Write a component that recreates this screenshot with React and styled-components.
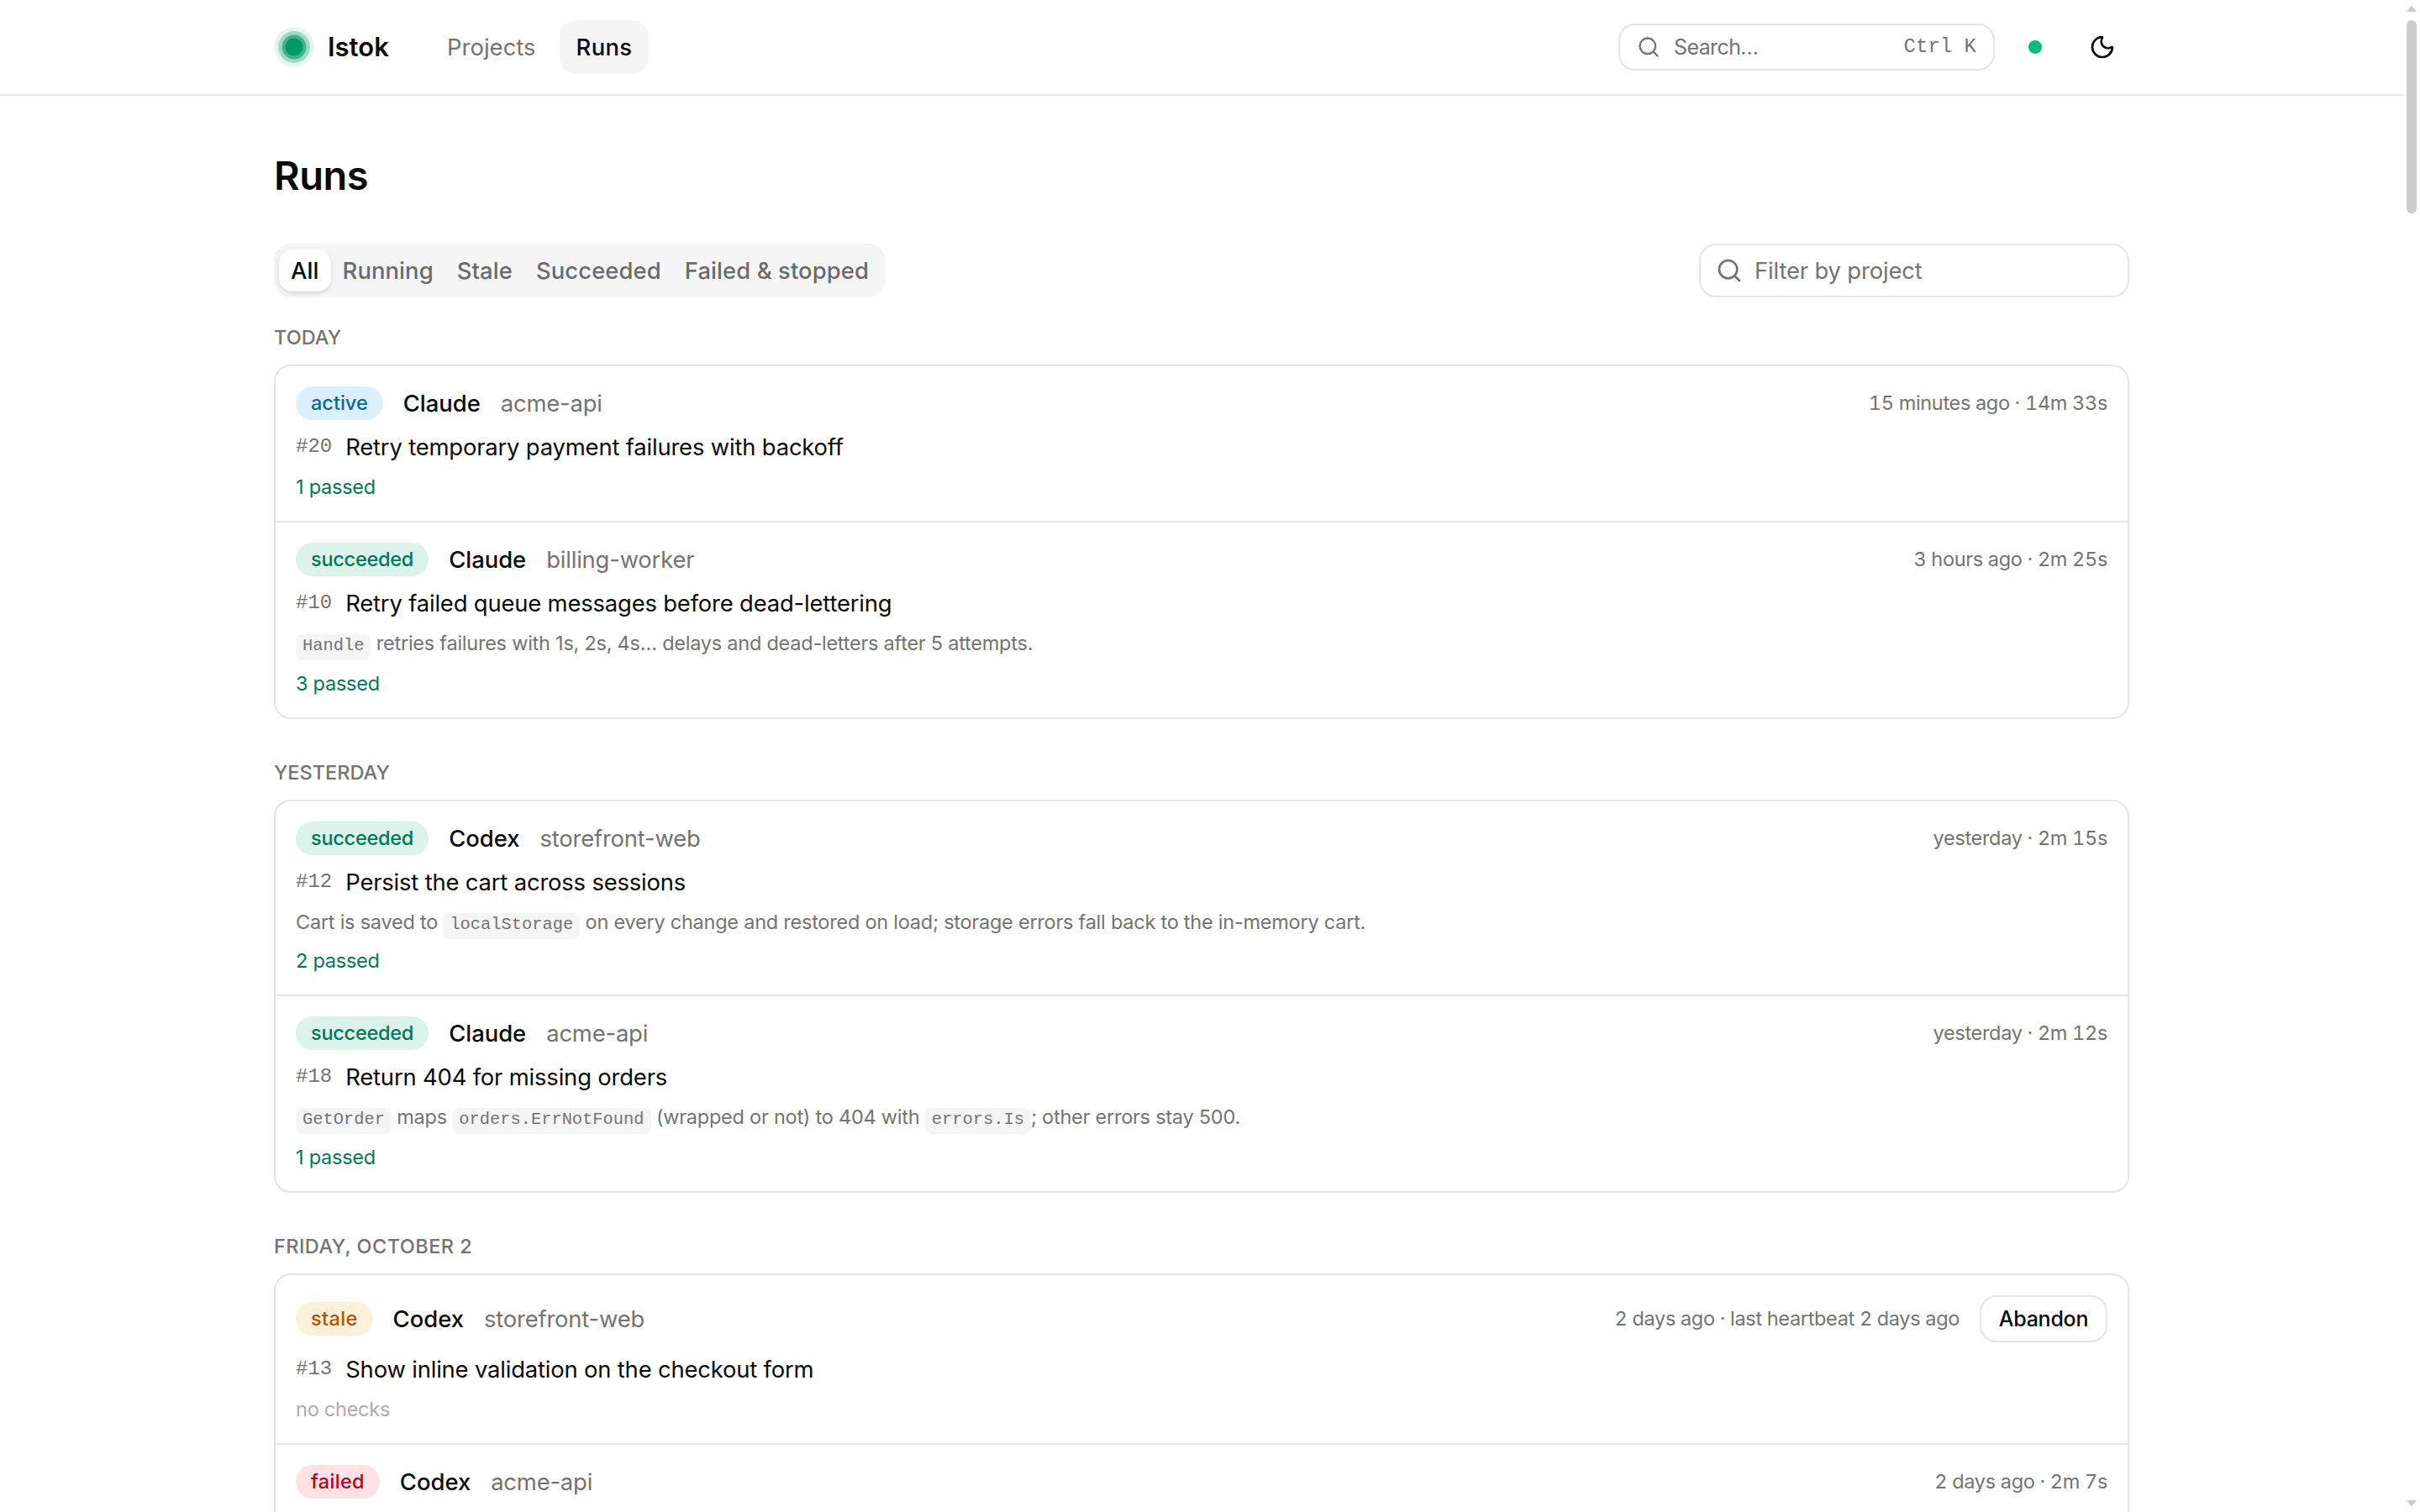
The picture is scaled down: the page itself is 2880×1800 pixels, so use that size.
import React from 'react';
import styled, { createGlobalStyle, css } from 'styled-components';
import { Moon, Search } from 'lucide-react';

const GlobalStyle = createGlobalStyle`
  * {
    box-sizing: border-box;
  }

  body {
    margin: 0;
    background: #fff;
    color: #0a0a0a;
    font-family: Inter, 'Liberation Sans', sans-serif;
    font-size: 27.4px;
    line-height: 40px;
    overflow: hidden;
  }

  h1, h2 {
    margin: 0;
  }
`;

const mono = css`
  font-family: 'Liberation Mono', monospace;
  letter-spacing: 0;
`;

const Page = styled.div`
  display: flex;
  height: 1800px;
  overflow: hidden;
`;

const Content = styled.div`
  flex: 1;
  min-width: 0;
  overflow: hidden;
`;

const Container = styled.div`
  width: 2208px;
  margin: 0 auto;
`;

const Header = styled.header`
  border-bottom: 2px solid #e5e5e5;
`;

const HeaderInner = styled(Container)`
  display: flex;
  align-items: center;
  height: 112px;
`;

const Brand = styled.div`
  display: flex;
  align-items: center;
  gap: 16px;
  width: 186px;
  font-size: 31px;
  font-weight: 600;
  letter-spacing: 0;
`;

const Nav = styled.nav`
  display: flex;
  gap: 8px;
`;

const NavLink = styled.a`
  display: flex;
  align-items: center;
  height: 64px;
  padding: 0 20px;
  border-radius: 20px;
  background: ${props => (props.$active ? '#f5f5f5' : 'transparent')};
  color: ${props => (props.$active ? '#0a0a0a' : '#737373')};
  font-weight: ${props => (props.$active ? 500 : 400)};
  letter-spacing: ${props => (props.$active ? '0.3px' : '0.05px')};
`;

const HeaderActions = styled.div`
  display: flex;
  align-items: center;
  margin-left: auto;
`;

const SearchButton = styled.div`
  display: flex;
  align-items: center;
  gap: 16px;
  width: 448px;
  height: 56px;
  padding: 0 20px;
  border: 2px solid #e5e5e5;
  border-radius: 20px;
  color: #737373;
  font-size: 25px;
  letter-spacing: -0.6px;
`;

const Shortcut = styled.kbd`
  ${mono}
  margin-left: auto;
  font-size: 24px;
`;

const StatusDot = styled.span`
  width: 16px;
  height: 16px;
  margin: 0 40px;
  border-radius: 50%;
  background: #00bc7d;
`;

const ThemeButton = styled.div`
  display: flex;
  align-items: center;
  justify-content: center;
  width: 64px;
  height: 64px;
`;

const Main = styled(Container)`
  padding-top: 64px;
`;

const Title = styled.h1`
  margin-bottom: 50px;
  font-size: 47px;
  font-weight: 600;
  line-height: 62px;
  letter-spacing: -0.5px;
`;

const Toolbar = styled.div`
  display: flex;
  justify-content: space-between;
  margin-bottom: 32px;
`;

const Tabs = styled.div`
  display: flex;
  align-items: center;
  height: 64px;
  padding: 0 6px;
  border-radius: 20px;
  background: #f5f5f5;
`;

const Tab = styled.div`
  display: flex;
  align-items: center;
  height: 50px;
  padding: 0 14px;
  border-radius: 16px;
  color: #6b6b6b;
  font-weight: 500;
  letter-spacing: 0.1px;
  ${props => props.$active && css`
    background: #fff;
    color: #0a0a0a;
    box-shadow: 0 2px 6px rgba(0, 0, 0, 0.1), 0 2px 4px -2px rgba(0, 0, 0, 0.1);
  `}
`;

const FilterInput = styled.div`
  display: flex;
  align-items: center;
  gap: 14px;
  width: 512px;
  height: 64px;
  padding: 0 18px;
  border: 2px solid #e5e5e5;
  border-radius: 20px;
  color: #737373;
  letter-spacing: -0.15px;
`;

const Group = styled.section`
  margin-bottom: 48px;
`;

const GroupTitle = styled.h2`
  margin-bottom: 16px;
  color: #737373;
  font-size: 23.5px;
  font-weight: 500;
  line-height: 32px;
  letter-spacing: ${props => props.$tracking || 0}px;
  text-transform: uppercase;
`;

const Card = styled.div`
  border: 2px solid #e5e5e5;
  border-radius: 20px;
`;

const Run = styled.article`
  display: flex;
  flex-direction: column;
  gap: 12px;
  min-height: 184px;
  padding: 24px;

  & + & {
    border-top: 2px solid #e5e5e5;
  }
`;

const RunHeader = styled.div`
  display: flex;
  align-items: center;
  gap: 24px;
  min-height: 40px;
`;

const badges = {
  active: { background: '#dbf0fe', color: '#0069a8', tracking: 0 },
  succeeded: { background: '#dbf3ea', color: '#007a55', tracking: -0.25 },
  stale: { background: '#fef0db', color: '#b45300', tracking: 0.35 },
  failed: { background: '#fde1e4', color: '#b8001f', tracking: 0.3 },
};

const Badge = styled.span`
  height: 40px;
  padding: 0 18px;
  border-radius: 20px;
  background: ${props => badges[props.$status].background};
  color: ${props => badges[props.$status].color};
  font-size: 23.5px;
  font-weight: 500;
  letter-spacing: ${props => badges[props.$status].tracking}px;
`;

const Agent = styled.span`
  font-weight: 500;
`;

const Project = styled.span`
  color: #737373;
  letter-spacing: -0.18px;
`;

const Meta = styled.span`
  margin-left: auto;
  color: #737373;
  font-size: 23.5px;
  font-variant-numeric: tabular-nums;
  letter-spacing: -0.33px;
`;

const AbandonButton = styled.button`
  width: 152px;
  height: 56px;
  padding: 0;
  border: 2px solid #e5e5e5;
  border-radius: 20px;
  background: #fff;
  color: #0a0a0a;
  font: 500 25px Inter, sans-serif;
  letter-spacing: -0.25px;
`;

const Task = styled.div`
  display: flex;
  align-items: center;
  gap: 16px;
  height: 40px;
`;

const TaskNumber = styled.span`
  ${mono}
  color: #737373;
  font-size: 24px;
`;

const TaskTitle = styled.span`
  letter-spacing: -0.17px;
`;

const Summary = styled.div`
  height: ${props => props.$height}px;
  color: #737373;
  font-size: 23.5px;
  line-height: 32px;
  letter-spacing: -0.24px;
  white-space: nowrap;
`;

const Code = styled.code`
  ${mono}
  padding: 2px 8px 6px;
  border-radius: 8px;
  background: #f5f5f5;
  font-size: 20.4px;
`;

const Checks = styled.div`
  color: ${props => (props.$empty ? '#acacac' : '#007a55')};
  font-size: 23.5px;
  line-height: 32px;
  letter-spacing: -0.25px;
`;

const Scrollbar = styled.div`
  display: flex;
  flex-direction: column;
  align-items: center;
  width: 20px;
  padding: 7px 0;
`;

const Thumb = styled.div`
  width: 12px;
  height: 230px;
  margin-top: 10px;
  border-radius: 6px;
  background: #cdcdcd;
`;

const Arrow = styled.svg`
  display: block;
  width: 12px;
  height: 7px;
  fill: #cdcdcd;

  &:last-child {
    margin-top: auto;
  }
`;

const groups = [
  {
    title: 'Today',
    runs: [
      {
        status: 'active',
        agent: 'Claude',
        project: 'acme-api',
        meta: '15 minutes ago · 14m 33s',
        number: 20,
        title: 'Retry temporary payment failures with backoff',
        checks: '1 passed',
      },
      {
        status: 'succeeded',
        agent: 'Claude',
        project: 'billing-worker',
        meta: '3 hours ago · 2m 25s',
        number: 10,
        title: 'Retry failed queue messages before dead-lettering',
        summary: <><Code>Handle</Code> retries failures with 1s, 2s, 4s… delays and dead-letters after 5 attempts.</>,
        checks: '3 passed',
      },
    ],
  },
  {
    title: 'Yesterday',
    runs: [
      {
        status: 'succeeded',
        agent: 'Codex',
        project: 'storefront-web',
        meta: 'yesterday · 2m 15s',
        number: 12,
        title: 'Persist the cart across sessions',
        summary: <>Cart is saved to <Code>localStorage</Code> on every change and restored on load; storage errors fall back to the in-memory cart.</>,
        summaryHeight: 34,
        checks: '2 passed',
      },
      {
        status: 'succeeded',
        agent: 'Claude',
        project: 'acme-api',
        meta: 'yesterday · 2m 12s',
        number: 18,
        title: 'Return 404 for missing orders',
        summary: <><Code>GetOrder</Code> maps <Code>orders.ErrNotFound</Code> (wrapped or not) to 404 with <Code>errors.Is</Code>; other errors stay 500.</>,
        checks: '1 passed',
      },
    ],
  },
  {
    title: 'Friday, October 2',
    tracking: 0.45,
    runs: [
      {
        status: 'stale',
        agent: 'Codex',
        project: 'storefront-web',
        meta: '2 days ago · last heartbeat 2 days ago',
        number: 13,
        title: 'Show inline validation on the checkout form',
      },
      {
        status: 'failed',
        agent: 'Codex',
        project: 'acme-api',
        meta: '2 days ago · 2m 7s',
      },
    ],
  },
];

const tabs = ['All', 'Running', 'Stale', 'Succeeded', 'Failed & stopped'];

function Logo() {
  return (
    <svg width="48" height="48" viewBox="0 0 48 48" fill="#009966">
      <circle cx="24" cy="24" r="23.8" opacity="0.1" />
      <circle cx="24" cy="24" r="19" opacity="0.3" />
      <circle cx="24" cy="24" r="14.4" opacity="0.6" />
      <circle cx="24" cy="24" r="10.6" />
    </svg>
  );
}

function RunRow({ run }) {
  return (
    <Run>
      <RunHeader>
        <Badge $status={run.status}>{run.status}</Badge>
        <Agent>{run.agent}</Agent>
        <Project>{run.project}</Project>
        <Meta>{run.meta}</Meta>
        {run.status === 'stale' && <AbandonButton>Abandon</AbandonButton>}
      </RunHeader>
      {run.title && (
        <>
          <Task>
            <TaskNumber>#{run.number}</TaskNumber>
            <TaskTitle>{run.title}</TaskTitle>
          </Task>
          {run.summary && <Summary $height={run.summaryHeight || 36}>{run.summary}</Summary>}
          <Checks $empty={!run.checks}>{run.checks || 'no checks'}</Checks>
        </>
      )}
    </Run>
  );
}

export default function App() {
  return (
    <>
      <GlobalStyle />
      <Page>
        <Content>
          <Header>
            <HeaderInner>
              <Brand>
                <Logo />
                Istok
              </Brand>
              <Nav>
                <NavLink>Projects</NavLink>
                <NavLink $active>Runs</NavLink>
              </Nav>
              <HeaderActions>
                <SearchButton>
                  <Search size={28} />
                  <span>Search…</span>
                  <Shortcut>Ctrl K</Shortcut>
                </SearchButton>
                <StatusDot />
                <ThemeButton>
                  <Moon size={32} />
                </ThemeButton>
              </HeaderActions>
            </HeaderInner>
          </Header>
          <Main>
            <Title>Runs</Title>
            <Toolbar>
              <Tabs>
                {tabs.map((tab, i) => <Tab key={tab} $active={i === 0}>{tab}</Tab>)}
              </Tabs>
              <FilterInput>
                <Search size={32} />
                Filter by project
              </FilterInput>
            </Toolbar>
            {groups.map(group => (
              <Group key={group.title}>
                <GroupTitle $tracking={group.tracking}>{group.title}</GroupTitle>
                <Card>
                  {group.runs.map(run => <RunRow key={run.meta} run={run} />)}
                </Card>
              </Group>
            ))}
          </Main>
        </Content>
        <Scrollbar>
          <Arrow viewBox="0 0 12 7"><path d="M6 0 12 7H0z" /></Arrow>
          <Thumb />
          <Arrow viewBox="0 0 12 7"><path d="M0 0h12L6 7z" /></Arrow>
        </Scrollbar>
      </Page>
    </>
  );
}
